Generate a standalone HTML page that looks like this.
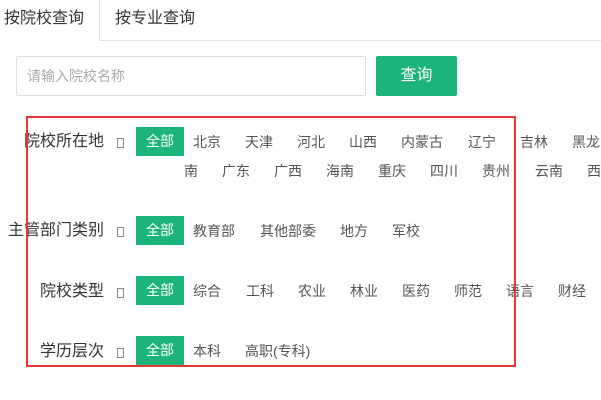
<!DOCTYPE html>
<html><head><meta charset="utf-8"><style>
*{margin:0;padding:0;box-sizing:border-box}
body{width:601px;height:400px;background:#fff;position:relative;overflow:hidden;font-family:"Liberation Sans","Noto Sans CJK SC",sans-serif;}
.a{position:absolute;white-space:nowrap;line-height:20px;}
.t{font-size:16px;color:#333;}
.i{font-size:14px;color:#555;}
.l{font-size:16px;color:#333;text-align:right;width:110px;left:-6px;}
.g{position:absolute;left:136px;width:48px;height:29px;background:#1db47c;color:#fff;font-size:14px;line-height:29px;text-align:center;}
.b{position:absolute;left:117px;width:7px;height:10px;border:1px solid #888;}
</style></head><body>
<div class="a t" style="left:4px;top:9px">按院校查询</div>
<div style="position:absolute;left:99px;top:0;width:1px;height:41px;background:#e3e3e3"></div>
<div style="position:absolute;left:99px;top:40px;width:502px;height:1px;background:#e3e3e3"></div>
<div class="a t" style="left:115px;top:9px">按专业查询</div>
<div style="position:absolute;left:16px;top:56px;width:350px;height:40px;border:1px solid #ddd;border-radius:2px"></div>
<div class="a" style="left:27px;top:66px;font-size:14px;color:#aaa">请输入院校名称</div>
<div style="position:absolute;left:376px;top:56px;width:81px;height:40px;background:#1db47c;border-radius:2px;color:#fff;font-size:16px;line-height:40px;text-align:center">查询</div>

<div class="a l" style="top:132px">院校所在地</div><div class="b" style="top:138px"></div>
<div class="g" style="top:127px">全部</div>
<div class="a i" style="left:193px;top:132px">北京</div>
<div class="a i" style="left:245px;top:132px">天津</div>
<div class="a i" style="left:297px;top:132px">河北</div>
<div class="a i" style="left:349px;top:132px">山西</div>
<div class="a i" style="left:401px;top:132px">内蒙古</div>
<div class="a i" style="left:468px;top:132px">辽宁</div>
<div class="a i" style="left:520px;top:132px">吉林</div>
<div class="a i" style="left:572px;top:132px">黑龙</div>
<div class="a i" style="left:184px;top:161px">南</div>
<div class="a i" style="left:222px;top:161px">广东</div>
<div class="a i" style="left:274px;top:161px">广西</div>
<div class="a i" style="left:326px;top:161px">海南</div>
<div class="a i" style="left:378px;top:161px">重庆</div>
<div class="a i" style="left:430px;top:161px">四川</div>
<div class="a i" style="left:482px;top:161px">贵州</div>
<div class="a i" style="left:535px;top:161px">云南</div>
<div class="a i" style="left:587px;top:161px">西</div>

<div class="a l" style="top:221px">主管部门类别</div><div class="b" style="top:227px"></div>
<div class="g" style="top:216px">全部</div>
<div class="a i" style="left:193px;top:221px">教育部</div>
<div class="a i" style="left:260px;top:221px">其他部委</div>
<div class="a i" style="left:340px;top:221px">地方</div>
<div class="a i" style="left:392px;top:221px">军校</div>

<div class="a l" style="top:282px">院校类型</div><div class="b" style="top:288px"></div>
<div class="g" style="top:276px">全部</div>
<div class="a i" style="left:193px;top:281px">综合</div>
<div class="a i" style="left:246px;top:281px">工科</div>
<div class="a i" style="left:298px;top:281px">农业</div>
<div class="a i" style="left:350px;top:281px">林业</div>
<div class="a i" style="left:402px;top:281px">医药</div>
<div class="a i" style="left:454px;top:281px">师范</div>
<div class="a i" style="left:506px;top:281px">语言</div>
<div class="a i" style="left:558px;top:281px">财经</div>

<div class="a l" style="top:342px">学历层次</div><div class="b" style="top:348px"></div>
<div class="g" style="top:336px">全部</div>
<div class="a i" style="left:193px;top:341px">本科</div>
<div class="a i" style="left:245px;top:341px">高职(专科)</div>

<div style="position:absolute;left:26px;top:116px;width:490px;height:251px;border:2px solid #e53935"></div>
</body></html>
